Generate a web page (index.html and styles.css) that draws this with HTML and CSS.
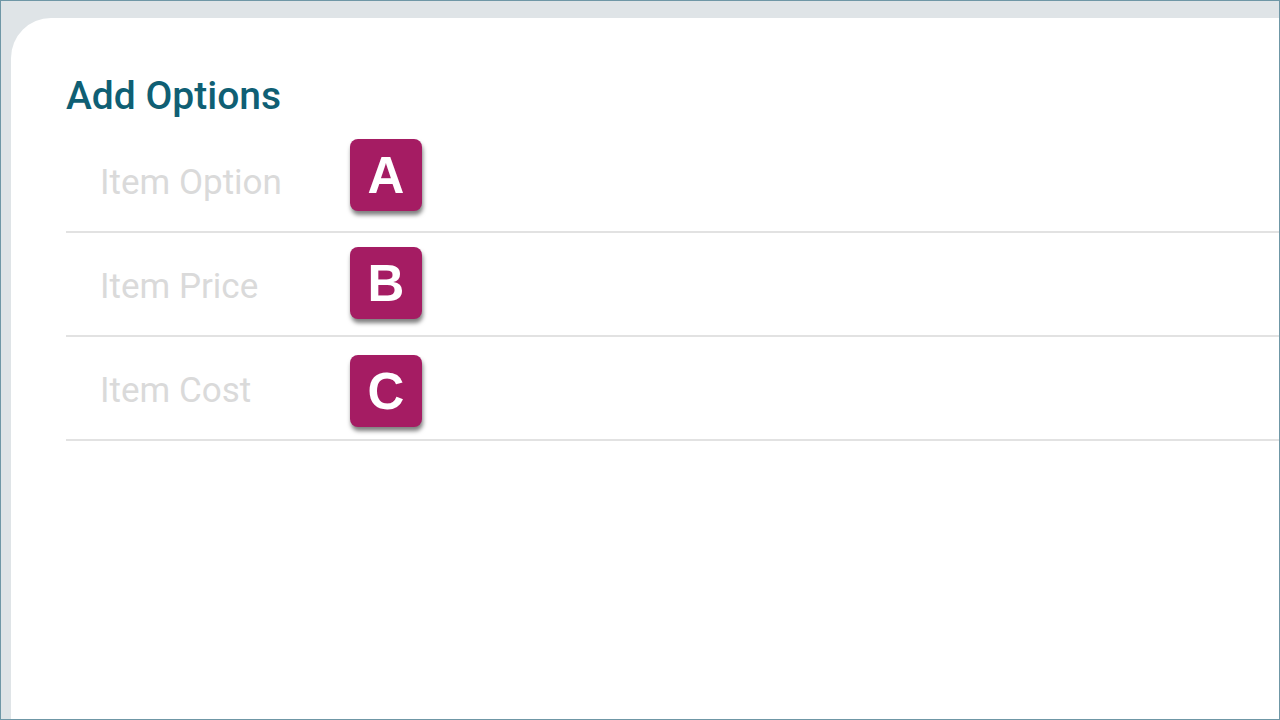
FILE: index.html
```html
<!DOCTYPE html>
<html lang="en">
<head>
    <meta charset="UTF-8">
    <meta name="viewport" content="width=device-width, initial-scale=1.0">
    <title>Add Options</title>
    <link rel="stylesheet" href="styles.css">
</head>
<body>
    <div class="frame">
        <div class="card">
            <h1>Add Options</h1>
            <div class="row">
                <span class="label">Item Option</span>
                <span class="badge">A</span>
            </div>
            <div class="row">
                <span class="label">Item Price</span>
                <span class="badge">B</span>
            </div>
            <div class="row">
                <span class="label">Item Cost</span>
                <span class="badge">C</span>
            </div>
        </div>
    </div>
</body>
</html>
```

FILE: styles.css
```css
html, body {
    margin: 0;
    height: 100%;
}
body {
    font-family: Roboto, "Noto Sans", sans-serif;
    background-color: #dfe4e7;
}
.frame {
    box-sizing: border-box;
    height: 720px;
    border: 1px solid #6f97a6;
    padding: 17px 0 0 10px;
    display: flex;
}
.card {
    flex: 1;
    background: white;
    border-top-left-radius: 40px;
    padding: 59px 0 0 55px;
}
h1 {
    margin: 0 0 13px 0;
    font-size: 39px;
    line-height: 39px;
    font-weight: 500;
    color: #0f5f74;
}
.row {
    display: flex;
    align-items: flex-start;
    height: 102px;
    border-bottom: 2px solid #e2e2e2;
}
.label {
    width: 250px;
    padding-left: 34px;
    margin-top: 36px;
    font-size: 35px;
    line-height: 35px;
    color: #dadada;
}
.badge {
    margin-top: 10px;
    width: 72px;
    height: 72px;
    border-radius: 8px;
    background-color: #a51c63;
    box-shadow: 1px 4px 4px rgba(0, 0, 0, 0.5);
    color: white;
    font-family: "Liberation Sans", Arial, sans-serif;
    font-weight: bold;
    font-size: 51px;
    display: flex;
    align-items: center;
    justify-content: center;
}
.row:nth-of-type(2) .badge {
    margin-top: 14px;
}
.row:nth-of-type(3) .badge {
    margin-top: 18px;
}
```
